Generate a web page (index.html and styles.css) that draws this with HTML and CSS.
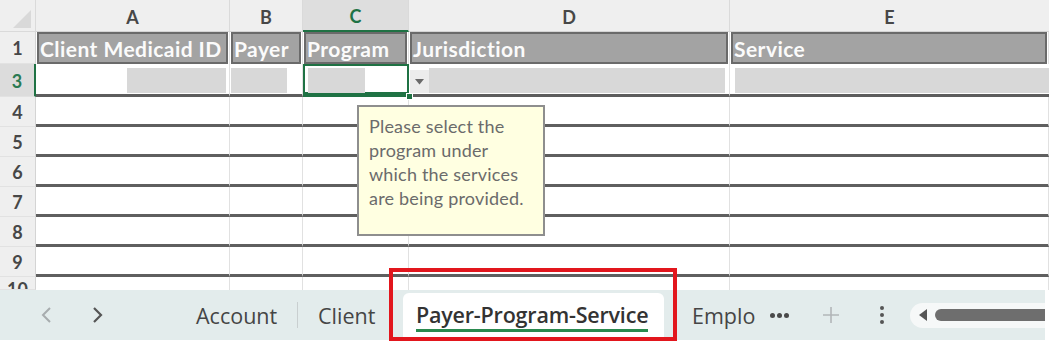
FILE: index.html
```html
<!DOCTYPE html>
<html>
<head>
<meta charset="utf-8">
<link rel="stylesheet" href="styles.css">
</head>
<body>
<div class="app">
  <div class="sheet">
    <div class="corner"><svg width="20" height="20" viewBox="0 0 20 20"><polygon points="19,1 19,19 1,19" fill="#d9d9d9"/></svg></div>
    <div class="colh">A</div>
    <div class="colh">B</div>
    <div class="colh colh-sel">C</div>
    <div class="colh">D</div>
    <div class="colh colh-last">E</div>

    <div class="rowh">1</div>
    <div class="c hdr"><span>Client Medicaid ID</span></div>
    <div class="c hdr"><span>Payer</span></div>
    <div class="c hdr"><span>Program</span></div>
    <div class="c hdr"><span>Jurisdiction</span></div>
    <div class="c hdr"><span>Service</span></div>

    <div class="rowh rowh-sel">3</div>
    <div class="c r3 r3a"><i class="blk blk-a"></i></div>
    <div class="c r3 r3b"><i class="blk blk-b"></i></div>
    <div class="c r3 r3c sel"><i class="blk blk-c"></i></div>
    <div class="c r3 r3d"><b class="dd"><svg width="9" height="6" viewBox="0 0 9 6"><polygon points="0,0 9,0 4.5,5.5" fill="#6a6a6a"/></svg></b><i class="blk blk-d"></i></div>
    <div class="c r3 r3e"><i class="blk blk-e"></i></div>

    <div class="rowh">4</div><div class="c ln"></div><div class="c ln"></div><div class="c ln"></div><div class="c ln"></div><div class="c ln"></div>
    <div class="rowh">5</div><div class="c ln"></div><div class="c ln"></div><div class="c ln"></div><div class="c ln"></div><div class="c ln"></div>
    <div class="rowh">6</div><div class="c ln"></div><div class="c ln"></div><div class="c ln"></div><div class="c ln"></div><div class="c ln"></div>
    <div class="rowh">7</div><div class="c ln"></div><div class="c ln"></div><div class="c ln"></div><div class="c ln"></div><div class="c ln"></div>
    <div class="rowh">8</div><div class="c ln"></div><div class="c ln"></div><div class="c ln"></div><div class="c ln"></div><div class="c ln"></div>
    <div class="rowh">9</div><div class="c ln"></div><div class="c ln"></div><div class="c ln"></div><div class="c ln"></div><div class="c ln"></div>
    <div class="rowh rowh-cut"><span>10</span></div><div class="c"></div><div class="c"></div><div class="c"></div><div class="c"></div><div class="c"></div>
  </div>

  <div class="tabbar">
    <div class="nav">
      <span class="arrow"><svg width="12" height="16" viewBox="0 0 12 16"><polyline points="10,1 3,8 10,15" fill="none" stroke="#a7acae" stroke-width="2"/></svg></span>
      <span class="arrow"><svg width="12" height="16" viewBox="0 0 12 16"><polyline points="2,1 9,8 2,15" fill="none" stroke="#555" stroke-width="2.2"/></svg></span>
    </div>
    <div class="tab tab-account">Account</div>
    <div class="sep"></div>
    <div class="tab tab-client">Client</div>
    <div class="tab tab-active"><span>Payer-Program-Service</span></div>
    <div class="tab tab-emp">Emplo</div>
    <div class="more"><i></i><i></i><i></i></div>
    <div class="plus"><svg width="18" height="18" viewBox="0 0 18 18"><path d="M9 1V17M1 9H17" stroke="#b2b6b8" stroke-width="1.6"/></svg></div>
    <div class="kebab"><i></i><i></i><i></i></div>
    <div class="scroll">
      <svg width="10" height="12" viewBox="0 0 10 12"><polygon points="9,0 9,12 1,6" fill="#555"/></svg>
      <div class="thumb"></div>
    </div>
  </div>

  <div class="tooltip">Please select the<br>program under<br>which the services<br>are being provided.</div>
  <div class="handle"></div>
  <div class="callout"></div>
</div>
</body>
</html>
```

FILE: styles.css
```css
* { box-sizing: border-box; }
html, body { margin: 0; padding: 0; background: #ffffff; }
.app {
  position: relative;
  width: 1049px;
  height: 355px;
  overflow: hidden;
  font-family: "Lato", "Liberation Sans", sans-serif;
}
.sheet {
  display: grid;
  grid-template-columns: 36px 194px 73px 106px 321px 319px;
  grid-template-rows: 32px 32px 33px repeat(6, 30px) 13px;
  background: #fff;
}
.corner {
  background: #efefef;
  border-right: 1px solid #dadada;
  border-bottom: 1px solid #dadada;
  padding: 9px 0 0 12px;
}
.corner svg { display: block; }
.colh {
  background: #efefef;
  border-right: 1px solid #dadada;
  border-bottom: 1px solid #d4d4d4;
  color: #474747;
  font-weight: 700;
  font-size: 18px;
  display: flex;
  align-items: center;
  justify-content: center;
  padding-top: 2px;
}
.colh-last { border-right: 0; }
.colh-sel {
  background: #dedede;
  color: #1f7244;
  border-bottom: 2px solid #1f7244;
}
.rowh {
  background: #efefef;
  border-right: 1px solid #d4d4d4;
  border-bottom: 1px solid #e2e2e2;
  color: #474747;
  font-weight: 700;
  font-size: 18px;
  display: flex;
  align-items: center;
  justify-content: center;
  padding-top: 1px;
}
.rowh-sel {
  background: #dcdcdc;
  color: #2a7a52;
  border-right: 2px solid #1f7244;
}
.rowh-cut { align-items: flex-start; overflow: hidden; }
.rowh-cut span { line-height: 18px; margin-top: 2px; }
.c {
  border-right: 1px solid #e1e1e1;
  position: relative;
}
.hdr { padding: 0 1px 0 1px; }
.hdr span {
  display: flex;
  align-items: center;
  height: 100%;
  background: #a3a3a3;
  border: 2px solid #6a6a6a;
  color: #fbfbfb;
  font-weight: 700;
  font-size: 21px;
  letter-spacing: 0.45px;
  padding: 0 0 0 1px;
  white-space: nowrap;
}
.r3 {
  border-bottom: 3px solid #5d5d5d;
  display: flex;
  align-items: flex-start;
  padding-top: 4px;
}
.blk { display: block; height: 25px; background: #d8d8d8; }
.r3a { justify-content: flex-end; padding-right: 3px; }
.blk-a { width: 99px; }
.r3b { padding-left: 1px; }
.blk-b { width: 56px; }
.sel { box-shadow: inset 0 0 0 2px #1f7244; border-right: 0; border-bottom-color: #1f7244; }
.r3c { padding-left: 5px; }
.blk-c { width: 57px; }
.r3d { padding-left: 1px; }
.dd {
  display: flex;
  align-items: center;
  justify-content: center;
  width: 19px;
  height: 23px;
  margin-top: 2px;
  background: #ececec;
}
.blk-d { width: 296px; }
.r3e { padding-left: 5px; border-right: 0; }
.blk-e { width: 314px; }
.ln { border-bottom: 3px solid #5f5f5f; }

.tabbar {
  height: 50px;
  background: #e3ecec;
  display: flex;
  align-items: center;
  font-family: "Open Sans", "Liberation Sans", sans-serif;
  color: #454545;
  width: 1045px;
}
.nav { display: flex; align-items: center; padding-left: 40px; width: 196px; flex: none; }
.arrow { display: flex; width: 52px; }
.arrow svg { display: block; }
.tab { font-size: 21.5px; white-space: nowrap; line-height: 26px; flex: none; }
.tab-account { width: 101px; margin-top: 2px; }
.sep { width: 1px; height: 26px; background: #c9cfd0; flex: none; }
.tab-client { width: 105px; padding-left: 20px; margin-top: 2px; }
.tab-active {
  align-self: flex-end;
  height: 47px;
  width: 261px;
  background: #ffffff;
  border-radius: 6px 6px 0 0;
  padding: 9px 0 0 13px;
  font-weight: 600;
  color: #333;
  letter-spacing: -0.2px;
}
.tab-active span {
  display: inline-block;
  border-bottom: 3px solid #2a8a4f;
  padding-bottom: 1px;
}
.tab-emp { width: 106px; padding-left: 28px; margin-top: 2px; }
.more { display: flex; gap: 2px; width: 52px; flex: none; }
.more i { display: block; width: 5px; height: 5px; border-radius: 50%; background: #4a4a4a; }
.plus { display: flex; width: 58px; flex: none; }
.kebab { display: flex; flex-direction: column; gap: 3px; width: 30px; flex: none; }
.kebab i { display: block; width: 4px; height: 4px; border-radius: 50%; background: #555; }
.scroll {
  flex: 1;
  height: 25px;
  background: #f6f8f8;
  border-radius: 13px 0 0 13px;
  display: flex;
  align-items: center;
  padding-left: 8px;
  gap: 7px;
}
.scroll svg { display: block; }
.thumb { flex: 1; height: 12px; background: #6e6e6e; border-radius: 6px 0 0 6px; }

.tooltip {
  position: absolute;
  left: 357px;
  top: 105px;
  width: 188px;
  height: 131px;
  background: #ffffe1;
  border: 2px solid #8e8e8e;
  padding: 7px 4px 0 10px;
  font-size: 18px;
  letter-spacing: 0.2px;
  line-height: 24px;
  color: #6b6b6b;
  white-space: nowrap;
}
.handle {
  position: absolute;
  left: 406px;
  top: 93px;
  width: 7px;
  height: 7px;
  background: #1f7244;
  border: 1px solid #fff;
}
.callout {
  position: absolute;
  left: 389px;
  top: 268px;
  width: 288px;
  height: 73px;
  border: 4px solid #e2161d;
}
```
